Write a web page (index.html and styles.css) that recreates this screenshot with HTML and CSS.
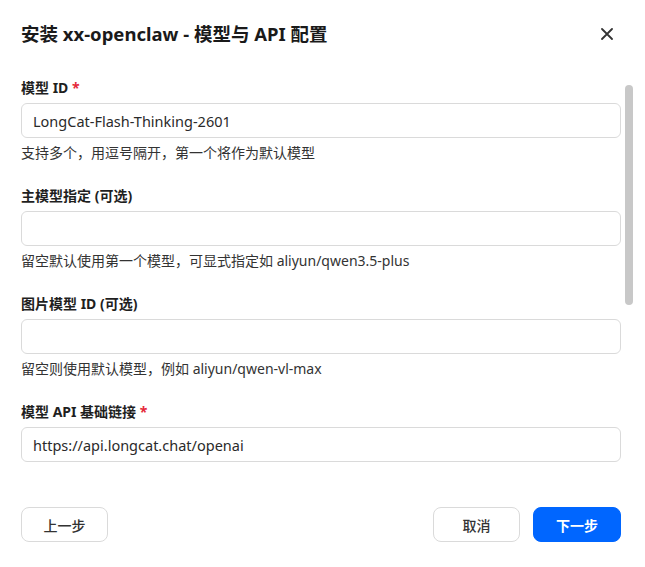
FILE: index.html
```html
<!DOCTYPE html>
<html lang="zh-CN">
<head>
<meta charset="utf-8">
<title>安装 xx-openclaw - 模型与 API 配置</title>
<link rel="stylesheet" href="styles.css">
</head>
<body>
<div class="modal">
  <header class="modal-header">
    <h1 class="modal-title">安装 xx-openclaw - 模型与 API 配置</h1>
    <button class="close-btn" aria-label="关闭">
      <svg width="12" height="12" viewBox="0 0 12 12"><path d="M1 1L11 11M11 1L1 11" stroke="#333" stroke-width="1.8" stroke-linecap="round"/></svg>
    </button>
  </header>
  <div class="modal-body">
    <div class="scroll-area">
      <div class="form">
        <div class="field">
          <label class="label">模型 ID <span class="req">*</span></label>
          <input class="input" type="text" value="LongCat-Flash-Thinking-2601">
          <div class="help">支持多个，用逗号隔开，第一个将作为默认模型</div>
        </div>
        <div class="field">
          <label class="label">主模型指定 (可选)</label>
          <input class="input" type="text" value="">
          <div class="help">留空默认使用第一个模型，可显式指定如 aliyun/qwen3.5-plus</div>
        </div>
        <div class="field">
          <label class="label">图片模型 ID (可选)</label>
          <input class="input" type="text" value="">
          <div class="help">留空则使用默认模型，例如 aliyun/qwen-vl-max</div>
        </div>
        <div class="field">
          <label class="label">模型 API 基础链接 <span class="req">*</span></label>
          <input class="input" type="text" value="https://api.longcat.chat/openai">
        </div>
      </div>
    </div>
    <div class="scroll-rail"><div class="scroll-thumb"></div></div>
  </div>
  <footer class="modal-footer">
    <button class="btn">上一步</button>
    <div class="footer-right">
      <button class="btn">取消</button>
      <button class="btn btn-primary">下一步</button>
    </div>
  </footer>
</div>
</body>
</html>
```
FILE: styles.css
```css
* { box-sizing: border-box; }
html, body { margin: 0; padding: 0; background: #ffffff; }
body {
  font-family: "Noto Sans", "Noto Sans CJK SC", sans-serif;
  color: #1f1f1f;
}
.modal {
  width: 645px;
  height: 567px;
  background: #fff;
  border-radius: 12px;
  display: flex;
  flex-direction: column;
  overflow: hidden;
}
.modal-header {
  height: 68px;
  flex: none;
  display: flex;
  align-items: center;
  justify-content: space-between;
  padding: 0 28px 0 21px;
}
.modal-title {
  margin: 0;
  font-size: 18.5px;
  font-weight: 700;
  color: #1a1a1a;
  line-height: 28px;
}
.close-btn {
  border: none;
  background: none;
  padding: 0;
  width: 20px;
  height: 20px;
  display: flex;
  align-items: center;
  justify-content: center;
  cursor: pointer;
}
.modal-body {
  height: 400px;
  flex: none;
  display: flex;
  gap: 4px;
  padding: 0 12px 0 21px;
}
.scroll-area {
  flex: 1;
  min-width: 0;
  overflow: hidden;
  padding-top: 10px;
}
.scroll-rail {
  width: 8px;
  flex: none;
  padding-top: 17px;
}
.scroll-thumb {
  width: 8px;
  height: 220px;
  border-radius: 4px;
  background: #c8c8c8;
}
.form { display: flex; flex-direction: column; gap: 23px; }
.field { display: flex; flex-direction: column; gap: 5px; }
.label {
  font-size: 14px;
  font-weight: 700;
  line-height: 20px;
  color: #1f1f1f;
}
.req { color: #e5283a; }
.input {
  height: 35px;
  border: 1px solid #dadada;
  border-radius: 6px;
  padding: 0 11px;
  font-family: inherit;
  font-size: 14.5px;
  color: #2a2a2a;
  outline: none;
  width: 100%;
  background: #fff;
}
.help {
  font-size: 14px;
  line-height: 20px;
  color: #333;
}
.modal-footer {
  flex: 1;
  display: flex;
  align-items: flex-start;
  justify-content: space-between;
  padding: 39px 24px 0 21px;
}
.footer-right { display: flex; gap: 13px; }
.btn {
  height: 35px;
  width: 87px;
  border: 1px solid #dadada;
  border-radius: 8px;
  background: #fff;
  font-family: inherit;
  font-size: 14px;
  font-weight: 500;
  color: #333;
  cursor: pointer;
}
.btn-primary {
  width: 88px;
  background: #0066ff;
  border-color: #0066ff;
  color: #fff;
  font-weight: 700;
}
```
